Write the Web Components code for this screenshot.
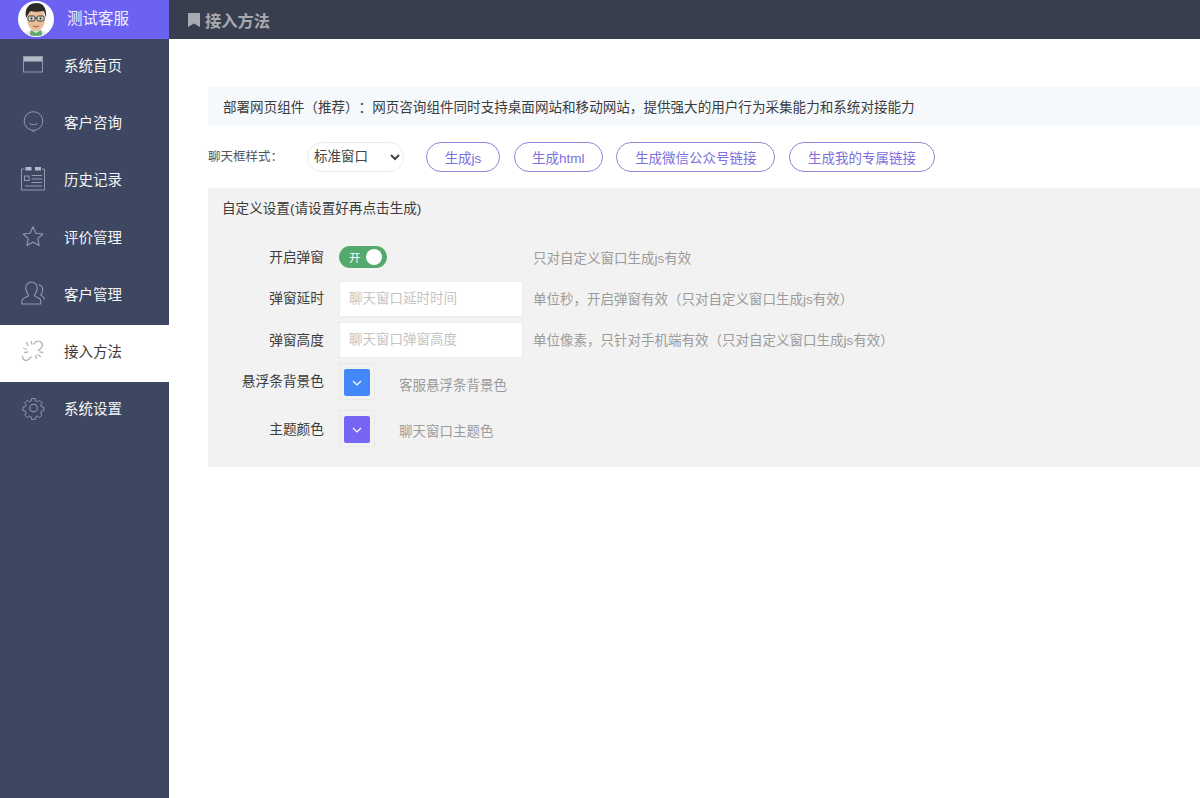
<!DOCTYPE html>
<html lang="zh-CN">
<head>
<meta charset="utf-8">
<title>接入方法</title>
<style>
html,body{margin:0;height:100%;overflow:hidden;background:#fff;font-family:"Liberation Sans","Noto Sans CJK SC",sans-serif;color:#333;text-spacing-trim:space-all}
</style>
</head>
<body>
<app-shell>
  <side-bar slot="side">
    <user-badge slot="top" name="测试客服"></user-badge>
    <nav-item icon="window">系统首页</nav-item>
    <nav-item icon="chat">客户咨询</nav-item>
    <nav-item icon="history">历史记录</nav-item>
    <nav-item icon="star">评价管理</nav-item>
    <nav-item icon="users">客户管理</nav-item>
    <nav-item icon="link" active>接入方法</nav-item>
    <nav-item icon="gear">系统设置</nav-item>
  </side-bar>
  <top-bar slot="head">接入方法</top-bar>
  <notice-banner>部署网页组件（推荐）：网页咨询组件同时支持桌面网站和移动网站，提供强大的用户行为采集能力和系统对接能力</notice-banner>
  <tool-row label="聊天框样式：">
    <pill-button style="width:74px">生成js</pill-button>
    <pill-button style="width:89px">生成html</pill-button>
    <pill-button style="width:159px">生成微信公众号链接</pill-button>
    <pill-button style="width:146px">生成我的专属链接</pill-button>
  </tool-row>
  <settings-panel heading="自定义设置(请设置好再点击生成)">
    <form-row label="开启弹窗" hint="只对自定义窗口生成js有效" style="height:42px;margin-bottom:3px;--lab:-1px;--hint:0px"><toggle-switch>开</toggle-switch></form-row>
    <form-row label="弹窗延时" hint="单位秒，开启弹窗有效（只对自定义窗口生成js有效）" style="height:36px;margin-bottom:5px;--lab:-2px;--hint:-1.500px"><text-field placeholder="聊天窗口延时时间"></text-field></form-row>
    <form-row label="弹窗高度" hint="单位像素，只针对手机端有效（只对自定义窗口生成js有效）" style="height:36px;margin-bottom:5px;--lab:-1px;--hint:-1px"><text-field placeholder="聊天窗口弹窗高度"></text-field></form-row>
    <form-row label="悬浮条背景色" hint="客服悬浮条背景色" tight style="height:37px;margin-bottom:10px;--lab:-2px;--hint:2px"><color-swatch color="#4488f8"></color-swatch></form-row>
    <form-row label="主题颜色" hint="聊天窗口主题色" tight style="height:37px;--lab:-1px;--hint:1px"><color-swatch color="#7765f4"></color-swatch></form-row>
  </settings-panel>
</app-shell>

<script>
const ICONS = {
  window:'<rect x=".5" y=".5" width="19" height="15.500" fill="none" stroke="currentColor" stroke-width="1"/><rect x="1" y="1" width="18" height="4.500" fill="#b4b9c6"/>',
  chat:'<circle cx="10.500" cy="10" r="9.300" fill="none" stroke="currentColor" stroke-width="1"/><path d="M6.500 12.500c1.500 1.600 6.500 1.600 8 0" fill="none" stroke="currentColor"/><path d="M9 19.300l1.500 1.700 1.500-1.700" fill="none" stroke="currentColor"/>',
  history:'<path d="M3.500 3H.5v21h23V3h-2.500" fill="none" stroke="currentColor"/><rect x="4.500" y="1" width="6" height="3.500" fill="#b4b9c6"/><rect x="14" y="1" width="6" height="3.500" fill="#b4b9c6"/><rect x="3.500" y="10" width="4.500" height="4.500" fill="none" stroke="currentColor"/><path d="M10.500 9.500H21M10.500 13H21M10.500 16.500H21M4 20H21" stroke="currentColor" fill="none"/>',
  star:'<path d="M11 1.800l2.900 6.400 7 .8-5.200 4.700 1.400 6.900L11 17.100l-6.100 3.500 1.400-6.900L1.100 9l7-.8z" fill="none" stroke="currentColor" stroke-width="1.100" stroke-linejoin="round"/>',
  users:'<path d="M.8 23v-2.500c0-3 3.500-4 6-5.200.8-.4.7-1.500.2-2.200C5.600 11.500 4.800 9.500 4.800 7c0-3.500 2.500-6 5.700-6s5.700 2.500 5.700 6c0 2.500-.8 4.500-2.200 6.100-.5.7-.6 1.800.2 2.200 2 1 4.500 1.800 5.400 3.500V23z" fill="none" stroke="currentColor" stroke-width="1.100" stroke-linejoin="round"/><path d="M17.500 3.500c3 .8 4.500 3.500 4 6.500-.2 1.500-1 2.800-1.800 3.800 1.500 1 3.500 2 3.800 4.700" fill="none" stroke="currentColor" stroke-width="1.100"/>',
  link:'<path d="M11 4.500l2.500-2.300c1.800-1.500 4.300-1.300 5.700.3 1.400 1.600 1.300 3.900-.1 5.400l-3 3M9.500 16.500l-2.800 2.800c-1.600 1.400-3.900 1.300-5.200-.1-.9-1-1.100-2.400-.7-3.500" fill="none" stroke="currentColor" stroke-width="1.500"/><path d="M1 8l4 1.500M4.500 2l1.500 4M9.500 1v3.500M14.500 19l-1-4M19 17l-3.500-2.500M21.500 12.500l-4-.5M2 12.500l4-.5" stroke="currentColor" stroke-width="1.300" fill="none"/>',
  gear:'<g fill="none" stroke="currentColor" stroke-width="1.100" stroke-linejoin="round"><path d="M8.500 1h4l.5 2.800 2.100.9 2.400-1.600 2.800 2.800-1.600 2.400.9 2.100 2.800.5v4l-2.800.5-.9 2.100 1.600 2.400-2.800 2.800-2.400-1.600-2.100.9-.5 2.800h-4l-.5-2.800-2.100-.9-2.400 1.600-2.800-2.800 1.600-2.400-.9-2.100-2.800-.5v-4l2.800-.5.9-2.100L.6 5.900l2.800-2.800 2.400 1.600 2.100-.9z" transform="translate(1.200 .6) scale(.88)"/><circle cx="10.500" cy="11" r="3.800"/></g>'
};
const ICON_BOX = {
  window:[20,17,20,17], chat:[21,22,21,22], history:[24,25,24,25], star:[22,22,22,22], users:[24,24,24,24], link:[22,22,22,22], gear:[21,22,21,22]
};
function define(name, css, html){
  customElements.define(name, class extends HTMLElement{
    constructor(){super();this.attachShadow({mode:'open'});}
    connectedCallback(){
      const h = typeof html==='function'?html(this):html;
      this.shadowRoot.innerHTML = `<style>${css}</style>${h}`;
    }
  });
}
define('app-shell',`
  :host{display:grid;grid-template-columns:169px 1fr;grid-template-rows:39px 1fr;width:1200px;height:798px;overflow:hidden}
  slot[name=side]{display:block;grid-row:1 / 3}
  main{padding:48px 0 0 39px;min-width:0;box-sizing:border-box}
`,`<slot name="side"></slot><slot name="head"></slot><main><slot></slot></main>`);

define('side-bar',`
  :host{display:block;background:#3e4761;height:798px}
`,`<slot name="top"></slot><slot></slot>`);

define('user-badge',`
  :host{display:flex;align-items:center;height:39px;background:#6c62f2;color:#f2f0ff;font-size:15.500px;padding-left:18px;box-sizing:border-box}
  svg{width:36px;height:36px;margin-right:13px;flex:none;margin-top:-1px}
  span{position:relative;top:-3px}
`,el=>`<svg viewBox="0 0 36 36"><defs><clipPath id="c"><circle cx="18" cy="18" r="17"/></clipPath></defs><circle cx="18" cy="18" r="18" fill="#fff"/><g clip-path="url(#c)"><rect width="36" height="36" fill="#fff"/><path d="M6 36c0-5 5-7 12-7s12 2 12 7z" fill="#dfe3e0"/><path d="M13 29l5 3 5-3 2 7H11z" fill="#5ea86c"/><ellipse cx="18" cy="18" rx="9" ry="12" fill="#e9bd9a"/><path d="M8 17C6 6 12 2 19 2c6 0 10 5 9 15-1-3-1-6-3-7-4 1-9 1-12 0-2 1-3 4-5 7z" fill="#2c2a28"/><rect x="10" y="15" width="7" height="5" rx="1.500" fill="#cfd8cc" stroke="#3a3a3a"/><rect x="19" y="15" width="7" height="5" rx="1.500" fill="#cfd8cc" stroke="#3a3a3a"/><path d="M17 17h2" stroke="#3a3a3a"/><circle cx="13.500" cy="17.500" r="1" fill="#222"/><circle cx="22.500" cy="17.500" r="1" fill="#222"/><path d="M15 25c2 1 4 1 6 0" stroke="#a5533f" fill="none"/></g></svg><span>${el.getAttribute('name')}</span>`);

define('nav-item',`
  :host{display:flex;height:57.200px;align-items:center;color:#f4f5f8;font-size:14.500px;box-sizing:border-box;padding-bottom:6px}
  :host([active]){background:#fff;color:#3c3c3c}
  .ic{width:64px;flex:none;display:flex;justify-content:center;padding-left:2px;box-sizing:border-box;color:#9299ad}
  :host([active]) .ic{color:#b4b8c2}
  svg{display:block;overflow:visible}
`,el=>{
  const k=el.getAttribute('icon');const b=ICON_BOX[k];
  return `<div class="ic"><svg width="${b[0]}" height="${b[1]}" viewBox="0 0 ${b[2]} ${b[3]}">${ICONS[k]}</svg></div><slot></slot>`;
});

define('top-bar',`
  :host{display:flex;align-items:center;height:39px;background:#393e4f;color:#a9abb2;font-size:16.300px;font-weight:700;padding-left:19px;box-sizing:border-box}
  svg{margin-right:5px;flex:none}
`,`<svg width="12" height="14" viewBox="0 0 12 14"><path d="M0 0h12v14L6 10.500 0 14z" fill="#a9abb2"/></svg><span><slot></slot></span>`);

define('notice-banner',`
  :host{display:flex;align-items:center;height:39px;background:#f5f9fc;color:#3c3c3c;font-size:13.570px;padding-left:15px;padding-bottom:2px;box-sizing:border-box;white-space:nowrap}
`,`<slot></slot>`);

define('tool-row',`
  :host{display:flex;align-items:center;height:30px;margin-top:16px;font-size:12.500px;color:#555}
  .lab{width:99px;flex:none;position:relative;top:-2px}
  select{width:97px;height:30px;border:1px solid #ececec;border-radius:15px;background:#fff;color:#444;font:13.500px "Liberation Sans","Noto Sans CJK SC",sans-serif;padding:0 3px 2px 2px;margin-right:22px;outline:none}
  .btns{display:flex;gap:13.700px}
`,el=>`<div class="lab">${el.getAttribute('label')}</div><select><option>标准窗口</option></select><div class="btns"><slot></slot></div>`);

define('pill-button',`
  :host{display:flex;align-items:center;justify-content:center;height:30px;box-sizing:border-box;border:1px solid #9184d8;border-radius:15px;color:#7d70dd;font-size:13.500px;white-space:nowrap;background:#fff}
`,`<slot></slot>`);

define('settings-panel',`
  :host{display:block;background:#f2f2f2;margin-top:16px;height:279px;box-sizing:border-box}
  h2{margin:0;height:48px;padding:11px 0 0 14px;box-sizing:border-box;font-weight:400;font-size:13.600px;color:#3c3c3c;line-height:20px}
`,el=>`<h2>${el.getAttribute('heading')}</h2><slot></slot>`);

define('form-row',`
  :host{display:flex;align-items:center;font-size:13.700px;color:#3c3c3c}
  .lab{width:116px;text-align:right;flex:none;margin-right:15px;white-space:nowrap;position:relative;top:var(--lab,0)}
  .hint{color:#9b9b9b;margin-left:10px;font-size:13.500px;white-space:nowrap;position:relative;top:var(--hint,0)}
  :host([tight]) .hint{margin-left:24px}
`,el=>`<div class="lab">${el.getAttribute('label')}</div><slot></slot><div class="hint">${el.getAttribute('hint')}</div>`);

define('toggle-switch',`
  :host{display:flex;align-items:center;width:48px;height:22px;border-radius:11px;background:#54a96d;color:#fff;font-size:11.500px;box-sizing:border-box;padding-left:10px;position:relative;margin-right:136px}
  i{position:absolute;right:5px;top:3px;width:16px;height:16px;border-radius:50%;background:#fff}
`,`<slot></slot><i></i>`);

define('text-field',`
  :host{display:block;width:184px;height:36px;flex:none}
  input{display:block;width:100%;height:100%;box-sizing:border-box;border:1px solid #ececec;background:#fff;padding:0 9px 2px;font:13.500px "Liberation Sans","Noto Sans CJK SC",sans-serif;outline:none}
  input::placeholder{color:#c4c4c4;opacity:1}
`,el=>`<input type="text" placeholder="${el.getAttribute('placeholder')}">`);

define('color-swatch',`
  :host{display:flex;align-items:center;justify-content:center;width:36px;height:37px;border:1px solid #e9e9e9;padding-top:2px;box-sizing:border-box;flex:none}
  div{width:26px;height:27px;border-radius:2px;display:flex;align-items:center;justify-content:center}
`,el=>`<div style="background:${el.getAttribute('color')}"><svg width="10" height="6" viewBox="0 0 10 6"><path d="M1 1l4 4 4-4" fill="none" stroke="#fff" stroke-width="1.200"/></svg></div>`);
</script>
</body>
</html>
